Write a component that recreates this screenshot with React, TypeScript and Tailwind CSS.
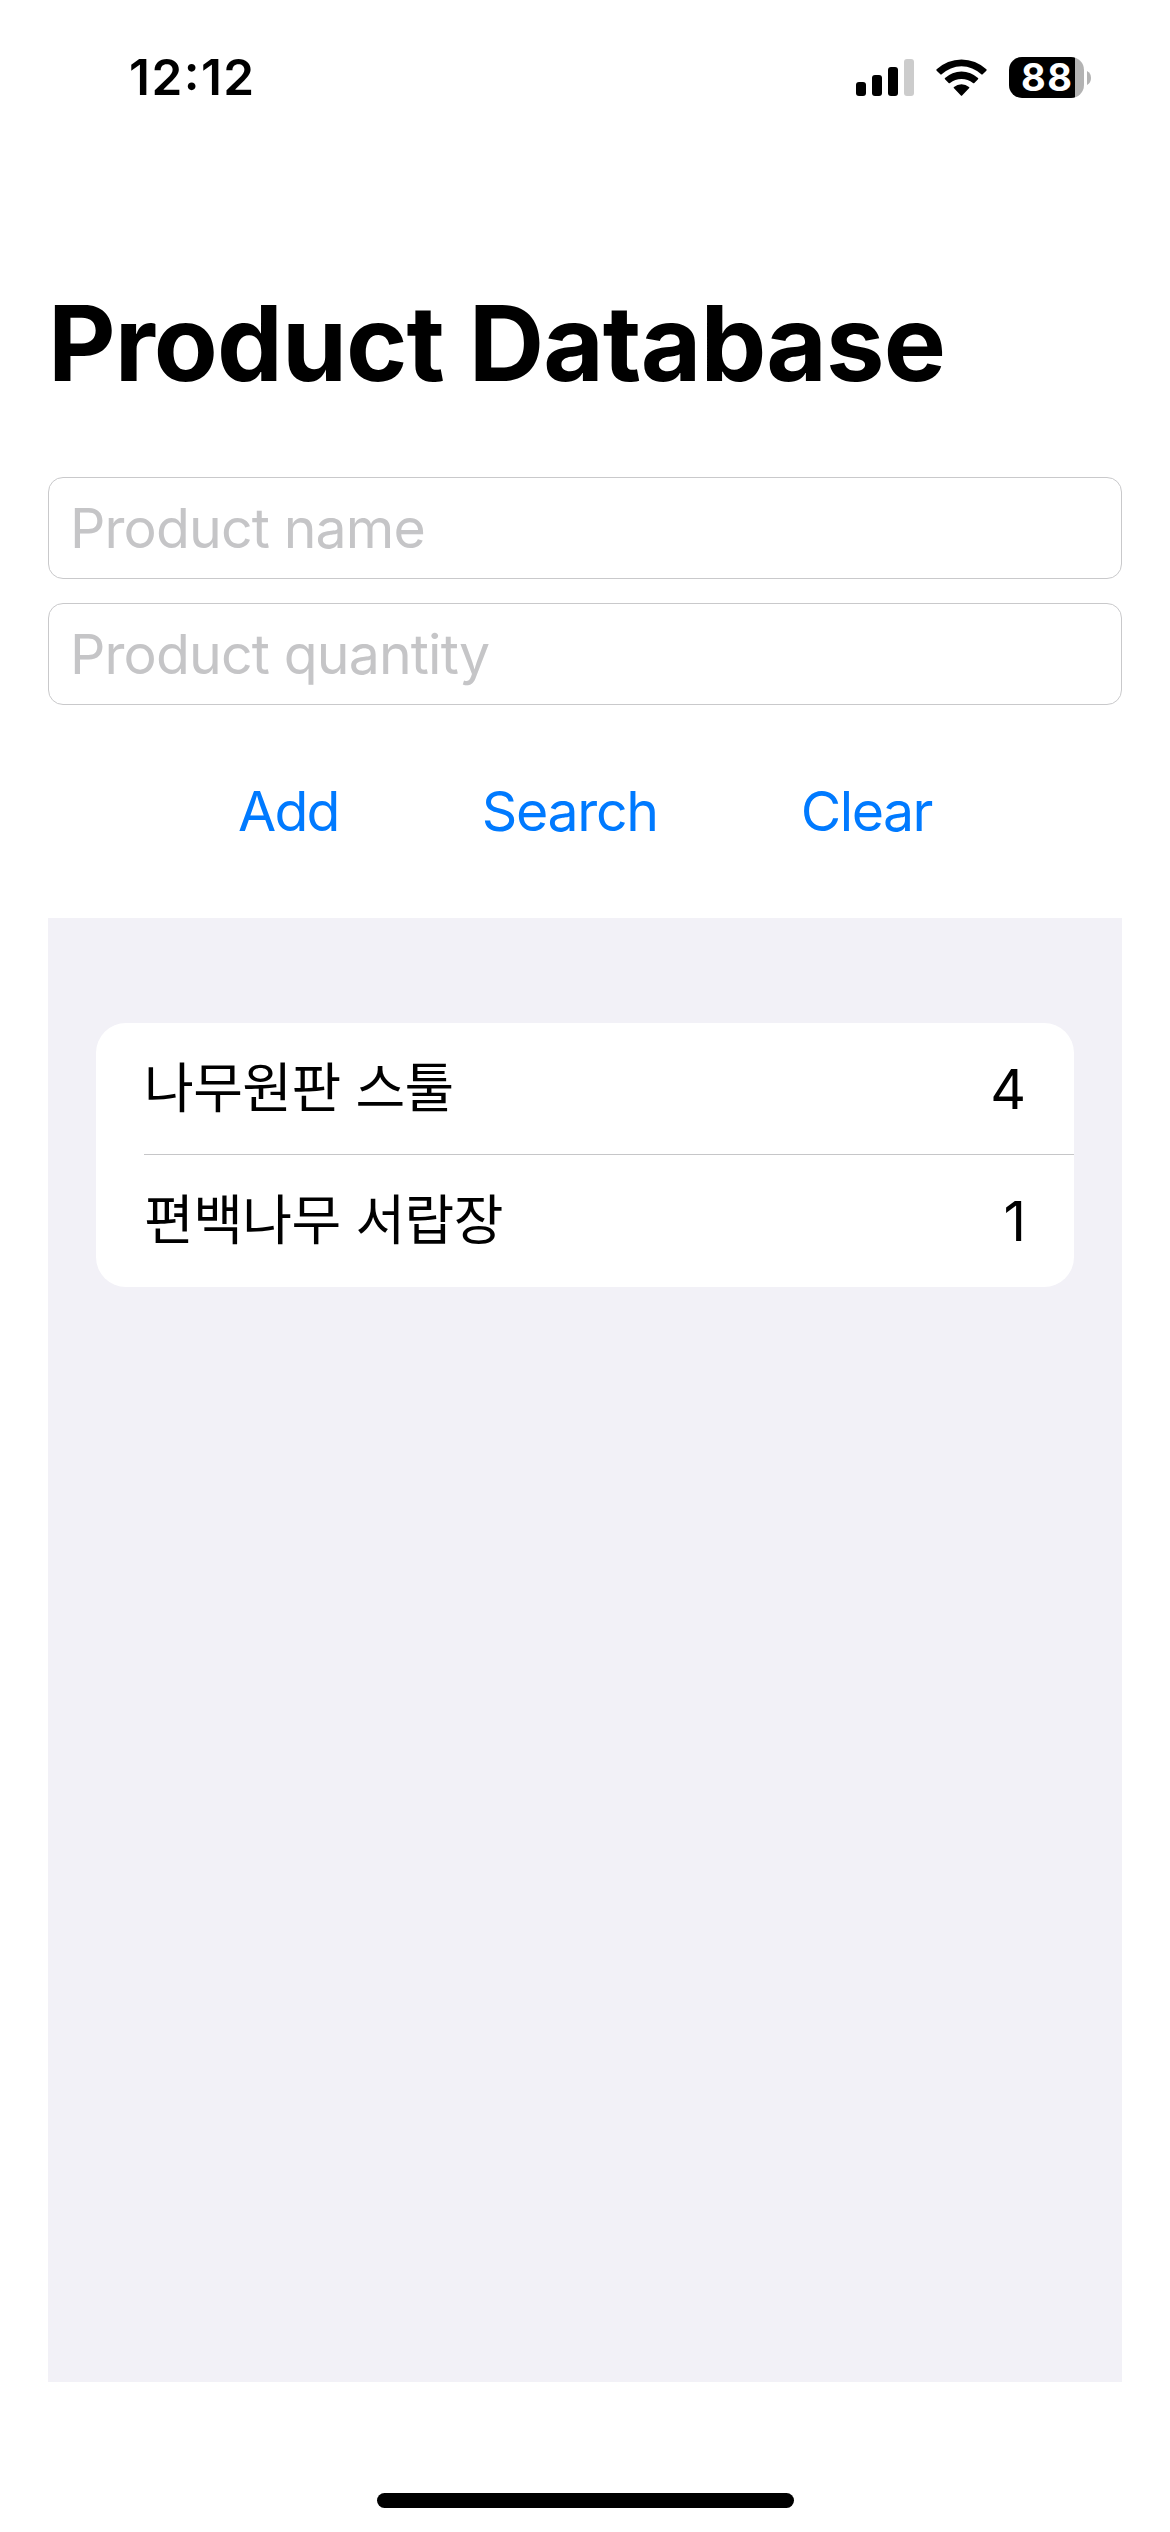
import { useState } from "react"

type Product = { id: number, name: string, quantity: number }

const products: Array<Product> = [
  { id: 1, name: "나무원판 스툴", quantity: 4 },
  { id: 2, name: "편백나무 서랍장", quantity: 1 },
]

const StatusBar = () => {
  return (
    <div className="h-[155px] pl-[129px] pr-[79px] flex items-center justify-between">
      <span className="mt-px text-[49.5px] leading-none font-semibold tracking-[1.45px] [font-feature-settings:'case'_1]">12:12</span>

      <div className="flex items-center">
        {/* Signal */}
        <div className="flex items-end gap-1.5 h-[37px]">
          <div className="w-2.5 h-3.5 rounded-[3px] bg-black" />
          <div className="w-2.5 h-[21px] rounded-[3px] bg-black" />
          <div className="w-2.5 h-[29px] rounded-[3px] bg-black" />
          <div className="w-2.5 h-[37px] rounded-[3px] bg-[#cccccc]" />
        </div>

        {/* Wifi */}
        <svg className="ml-[22px] w-[51px] h-[37px]" viewBox="0 0 153 111">
          <path d="M2 31 A108 108 0 0 1 151 31 Q153 33 151 35 L140 46 Q138 48 136 46 A86 86 0 0 0 17 46 Q15 48 13 46 L2 35 Q0 33 2 31 Z" />
          <path d="M27 57 A72 72 0 0 1 126 57 Q128 59 126 61 L115 72 Q113 74 111 72 A56 56 0 0 0 42 72 Q40 74 38 72 L27 61 Q25 59 27 57 Z" />
          <path d="M54 84 A35 35 0 0 1 99 84 Q101 86 99 88 L79 109 Q76.500 112 74 109 L54 88 Q52 86 54 84 Z" />
        </svg>

        {/* Battery */}
        <div className="ml-[22px] pl-3 w-[75px] h-[41px] rounded-[13px] bg-linear-to-r from-black from-88% to-[#b3b3b3] to-88%">
          <span className="block leading-[41px] text-[38px] font-bold tracking-[1.5px] text-white">88</span>
        </div>
        <svg className="ml-[3px] w-1 h-3.5" viewBox="0 0 4 14">
          <path d="M0 0 Q4 2 4 7 Q4 12 0 14 Z" fill="#b3b3b3" />
        </svg>
      </div>
    </div>
  )
}

const Field = ({ placeholder, value, onChange }: { placeholder: string, value: string, onChange: (value: string) => void }) => {
  return (
    <input
      className="block w-full h-[102px] px-[21px] pb-0.5 border border-[#c9c9cb] rounded-[15px] text-[55.4px] tracking-[-0.85px] placeholder:text-[#c5c5c7] outline-none"
      placeholder={placeholder}
      value={value}
      onChange={(e) => onChange(e.target.value)}
    />
  )
}

const App = () => {

  const [name, setName] = useState("")
  const [quantity, setQuantity] = useState("")
  const [list, setList] = useState(products)

  const add = () => {
    if( name === "" ) return
    setList([...list, { id: list.length + 1, name, quantity: Number(quantity) }])
  }

  const search = () => {
    setList(products.filter((product) => product.name.includes(name)))
  }

  const clear = () => {
    setName("")
    setQuantity("")
  }

  return (
    <div className="w-[1170px] h-[2532px] flex flex-col bg-white text-black font-['Inter','Noto_Sans_CJK_KR',sans-serif]">
      <StatusBar />

      <main className="flex-1 flex flex-col px-12">
        <h1 className="mt-[124px] h-32 leading-[128px] text-[104.5px] font-bold tracking-[-0.95px] [word-spacing:1px] whitespace-nowrap">Product Database</h1>

        <div className="mt-[70px] flex flex-col gap-6">
          <Field placeholder="Product name" value={name} onChange={setName} />
          <Field placeholder="Product quantity" value={quantity} onChange={setQuantity} />
        </div>

        <div className="h-[213px] pb-0.5 flex items-center justify-center gap-[143px] text-[55.4px] leading-none text-[#007aff]">
          <button className="tracking-[-1.8px]" onClick={add}>Add</button>
          <button className="tracking-[-1.3px]" onClick={search}>Search</button>
          <button className="tracking-[-1.5px]" onClick={clear}>Clear</button>
        </div>

        {/* Product list */}
        <div className="h-[1464px] px-12 pt-[105px] bg-[#f2f1f7]">
          <ul className="bg-white rounded-[30px] overflow-hidden">
            {list.map((product) => (
              <li key={product.id} className="group pl-12">
                <div className="h-[132px] pr-12 flex items-center justify-between border-b border-[#c6c6c8] group-last:border-b-0">
                  <span className="text-[54px] leading-none tracking-[-0.5px]">{product.name}</span>
                  <span className="text-[55.4px] leading-none">{product.quantity}</span>
                </div>
              </li>
            ))}
          </ul>
        </div>
      </main>

      {/* Home indicator */}
      <div className="mb-6 mx-auto w-[417px] h-[15px] rounded-full bg-black" />
    </div>
  )
}

export default App
